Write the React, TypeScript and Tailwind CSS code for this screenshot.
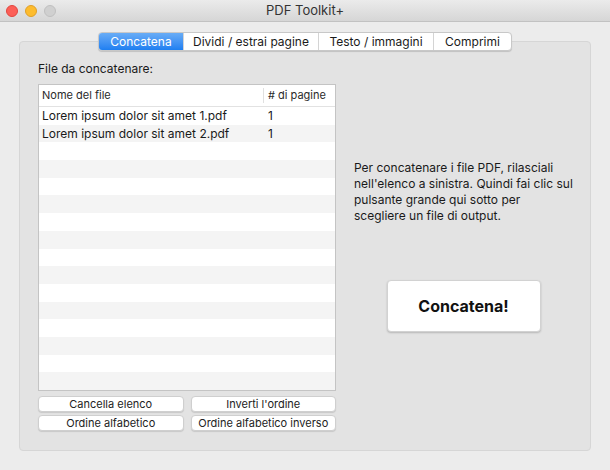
import React from "react";

const files = [
  { name: "Lorem ipsum dolor sit amet 1.pdf", pages: "1" },
  { name: "Lorem ipsum dolor sit amet 2.pdf", pages: "1" },
];

const tabs = [
  { label: "Concatena", w: "w-[84px]" },
  { label: "Dividi / estrai pagine", w: "w-[135px]" },
  { label: "Testo / immagini", w: "w-[115px]" },
  { label: "Comprimi", w: "w-[78px]" },
];

const SmallButton = ({ children }: { children: React.ReactNode }) => (
  <button className="h-[16px] flex-1 rounded-[4px] border border-[#cfcfcf] bg-white text-[11px] leading-[14px] text-[#222] whitespace-nowrap shadow-[0_1px_1px_rgba(0,0,0,0.12)]">
    {children}
  </button>
);

const App = () => {
  const rows = Array.from({ length: 16 }, (_, i) => files[i] ?? null);

  return (
    <div
      className="w-[610px] h-[470px] bg-[#ececec] flex flex-col overflow-hidden text-[#1a1a1a]"
      style={{ fontFamily: 'Inter, "Liberation Sans", Arial, sans-serif' }}
    >
      {/* title bar */}
      <div className="h-[22px] shrink-0 flex items-center px-[6px] bg-gradient-to-b from-[#ebebeb] to-[#d6d6d6] border-b border-[#c2c2c2]">
        <div className="flex gap-[7px] w-[60px]">
          <span className="w-[12px] h-[12px] rounded-full bg-[#fc5f57] border border-[#e2463f]" />
          <span className="w-[12px] h-[12px] rounded-full bg-[#fdbc2e] border border-[#e0a028]" />
          <span className="w-[12px] h-[12px] rounded-full bg-[#d0d0d0] border border-[#c0c0c0]" />
        </div>
        <div className="flex-1 text-center text-[13px] text-[#333] pr-[60px]">PDF Toolkit+</div>
      </div>

      <div className="flex flex-col items-center pt-[10px] px-[19px]">
        {/* segmented tabs */}
        <div className="relative z-10 flex h-[19px] rounded-[4px] border border-[#c8c8c8] bg-white shadow-[0_1px_1px_rgba(0,0,0,0.15)] overflow-hidden">
          {tabs.map((t, i) => (
            <div
              key={t.label}
              className={`${t.w} flex items-center justify-center text-[12px] whitespace-nowrap ${
                i === 0
                  ? "bg-gradient-to-b from-[#68acf6] to-[#1d7ff1] text-white"
                  : "text-[#1a1a1a] border-l border-[#d4d4d4]"
              }`}
            >
              {t.label}
            </div>
          ))}
        </div>

        {/* group box */}
        <div className="-mt-[10px] w-full h-[410px] rounded-[4px] border border-[#d6d6d6] bg-[#e3e3e3] flex pt-[19px] pl-[18px] pr-[17px]">
          <div className="w-[298px] shrink-0 flex flex-col">
            <div className="text-[12px] leading-[16px]">File da concatenare:</div>
            <div className="mt-[7px] h-[307px] border border-[#c4c4c4] bg-white overflow-hidden flex flex-col">
              <div className="h-[22px] shrink-0 flex items-center text-[11px] text-[#2a2a2a] border-b border-[#e2e2e2] whitespace-nowrap">
                <div className="w-[224px] pl-[3px]">Nome del file</div>
                <div className="h-[15px] border-l border-[#e0e0e0] pl-[4px] leading-[15px]"># di pagine</div>
              </div>
              {rows.map((r, i) => (
                <div
                  key={i}
                  className={`h-[17.7px] shrink-0 flex items-center text-[12px] whitespace-nowrap ${
                    i % 2 === 1 ? "bg-[#f4f4f4]" : "bg-white"
                  }`}
                >
                  <div className="w-[224px] pl-[3px]">{r?.name}</div>
                  <div className="pl-[5px]">{r?.pages}</div>
                </div>
              ))}
            </div>
            <div className="mt-[5px] flex gap-[7px]">
              <SmallButton>Cancella elenco</SmallButton>
              <SmallButton>Inverti l'ordine</SmallButton>
            </div>
            <div className="mt-[3px] flex gap-[7px]">
              <SmallButton>Ordine alfabetico</SmallButton>
              <SmallButton>Ordine alfabetico inverso</SmallButton>
            </div>
          </div>

          <div className="flex-1 pl-[18px] pb-[20px] flex flex-col justify-center">
            <p className="text-[12px] leading-[16px] whitespace-nowrap">
              Per concatenare i file PDF, rilasciali
              <br />
              nell'elenco a sinistra. Quindi fai clic sul
              <br />
              pulsante grande qui sotto per
              <br />
              scegliere un file di output.
            </p>
            <div className="mt-[56px] flex justify-center">
              <button className="w-[154px] h-[52px] rounded-[4px] border border-[#d2d2d2] bg-white text-[16px] font-bold text-[#111] shadow-[0_1px_2px_rgba(0,0,0,0.2)]">
                Concatena!
              </button>
            </div>
          </div>
        </div>
      </div>
    </div>
  );
};

export default App;
